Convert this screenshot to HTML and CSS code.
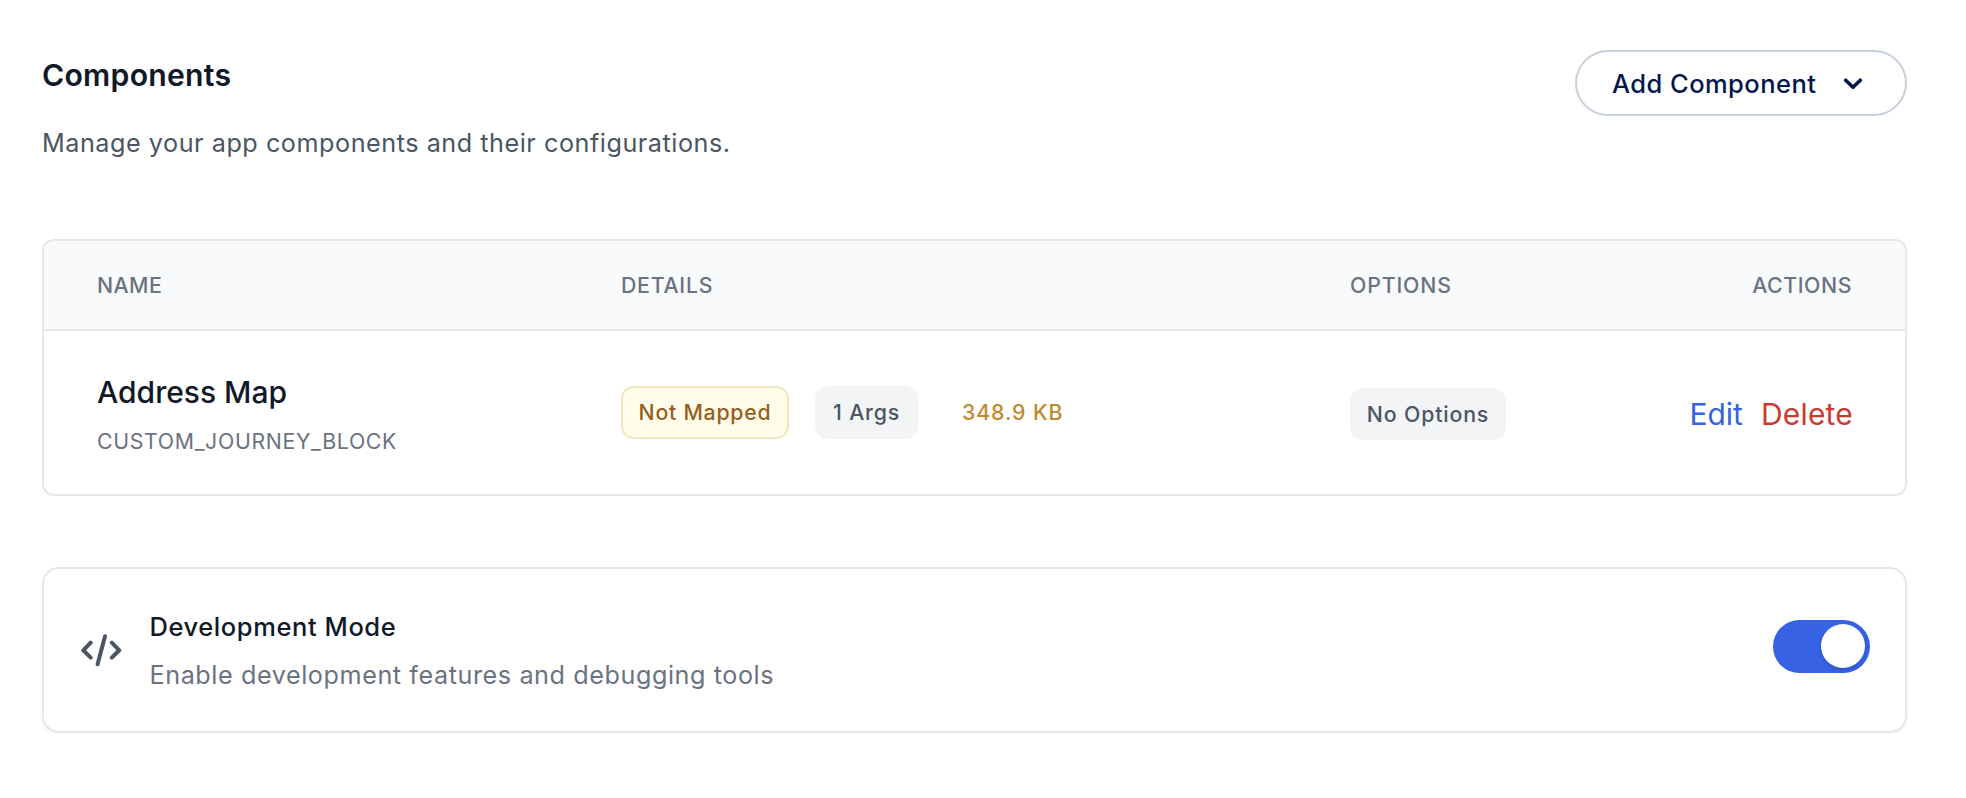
FILE: index.html
```
<!DOCTYPE html>
<html lang="en">
<head>
<meta charset="utf-8">
<title>Components</title>
<link rel="stylesheet" href="styles.css">
</head>
<body>
<main class="page">
  <header class="header">
    <div class="intro">
      <h1 class="title">Components</h1>
      <p class="subtitle">Manage your app components and their configurations.</p>
    </div>
    <button class="add-button" type="button">
      <span>Add Component</span>
      <svg class="chevron" viewBox="0 0 20 12" fill="none" stroke="currentColor" stroke-width="3.6" stroke-linecap="round" stroke-linejoin="round"><path d="M2.7 2.2 10 9.3l7.3-7.1"/></svg>
    </button>
  </header>

  <section class="table">
    <div class="row head">
      <div class="th-name">Name</div>
      <div class="th-details">Details</div>
      <div class="th-options">Options</div>
      <div class="th-actions">Actions</div>
    </div>
    <div class="row item">
      <div class="name-cell">
        <div class="name">Address Map</div>
        <div class="type">CUSTOM_JOURNEY_BLOCK</div>
      </div>
      <div class="details">
        <span class="badge warning">Not Mapped</span>
        <span class="badge args">1 Args</span>
        <span class="size">348.9 KB</span>
      </div>
      <div class="options"><span class="badge none">No Options</span></div>
      <div class="actions"><a class="edit">Edit</a><a class="delete">Delete</a></div>
    </div>
  </section>

  <section class="dev-card">
    <svg class="code-icon" viewBox="0 0 42 36" fill="none" stroke="currentColor" stroke-width="4" stroke-linecap="round" stroke-linejoin="round"><path d="M10.7 10.6 3.2 18.3l7.5 7.3M31.8 10.6l7.5 7.7-7.5 7.3"/><path d="M25 4.2 17.6 32.2"/></svg>
    <div class="dev-text">
      <div class="dev-title">Development Mode</div>
      <div class="dev-desc">Enable development features and debugging tools</div>
    </div>
    <div class="toggle" role="switch" aria-checked="true"><span class="knob"></span></div>
  </section>
</main>
</body>
</html>
```
FILE: styles.css
```
* { box-sizing: border-box; }
body {
  margin: 0;
  background: #fff;
  color: #111827;
  font-family: Inter, "Liberation Sans", sans-serif;
}
.page { padding: 50px 59px 0 42px; }

.header {
  display: flex;
  justify-content: space-between;
  align-items: flex-start;
  height: 189px;
}
.intro { padding-top: 3px; }
.title {
  margin: 0 0 26px;
  font-size: 30.2px;
  line-height: 44px;
  font-weight: 600;
  letter-spacing: 0.25px;
}
.subtitle {
  margin: 0;
  color: #4b5563;
  font-size: 25.2px;
  line-height: 40px;
  letter-spacing: 0.53px;
}
.add-button {
  display: flex;
  align-items: center;
  justify-content: space-between;
  width: 332px;
  height: 66px;
  padding: 1px 42px 0 35px;
  border: 2px solid #c6cfdc;
  border-radius: 33px;
  background: #fff;
  color: #03174d;
  font-family: inherit;
  font-size: 25.5px;
  font-weight: 500;
  letter-spacing: 0.45px;
}
.chevron { width: 20px; height: 12px; }

.table {
  border: 2px solid #e5e7eb;
  border-radius: 12px;
  overflow: hidden;
}
.row {
  display: grid;
  grid-template-columns: 524px 729px 230px 1fr;
  padding: 0 53px;
}
.head {
  height: 90px;
  align-items: center;
  border-bottom: 2px solid #e5e7eb;
  background: #f9fafc;
  color: #6b7280;
  font-size: 21.3px;
  font-weight: 450;
  line-height: 32px;
  text-transform: uppercase;
}
.th-name { letter-spacing: 0.45px; }
.th-details { letter-spacing: 0.75px; }
.th-options { letter-spacing: 0.85px; }
.th-actions { letter-spacing: 0.57px; text-align: right; }

.item { height: 163px; align-items: start; }
.name-cell { padding-top: 39px; }
.name {
  margin-bottom: 11px;
  font-size: 30px;
  line-height: 44px;
  font-weight: 500;
  letter-spacing: 0;
}
.type {
  color: #6b7280;
  font-size: 21.3px;
  line-height: 32px;
  letter-spacing: 0.67px;
}
.details { display: flex; align-items: center; padding-top: 55px; }
.badge {
  display: flex;
  align-items: center;
  justify-content: center;
  height: 53px;
  padding-bottom: 1px;
  border-radius: 13px;
  background: #f3f4f6;
  color: #4b5563;
  font-size: 21.3px;
  font-weight: 500;
  letter-spacing: 0.8px;
}
.warning {
  width: 168px;
  margin-right: 26px;
  border: 2px solid #f3e5c0;
  background: #fffdea;
  color: #975f1f;
  letter-spacing: 0.75px;
}
.args { width: 103px; margin-right: 44px; }
.none { width: 156px; height: 52px; letter-spacing: 0.84px; }
.size {
  padding-bottom: 1px;
  color: #c08a2d;
  font-size: 21.3px;
  font-weight: 500;
  letter-spacing: 0.89px;
}
.options { display: flex; padding-top: 57px; }
.actions {
  display: flex;
  justify-content: flex-end;
  gap: 18px;
  padding-top: 61px;
  font-size: 30px;
  line-height: 44px;
}
.edit { color: #3662e3; }
.delete { color: #cb3a31; letter-spacing: 0.2px; margin-right: -1px; }

.dev-card {
  display: flex;
  align-items: flex-start;
  height: 166px;
  margin-top: 71px;
  padding: 0 35px 0 36px;
  border: 2px solid #e5e7eb;
  border-radius: 17px;
  box-shadow: 0 2px 4px rgba(0, 0, 0, 0.05);
}
.code-icon {
  width: 42px;
  height: 36px;
  margin: 63px 27.5px 0 0;
  color: #4b5563;
}
.dev-text { padding-top: 40px; }
.dev-title {
  margin-bottom: 12px;
  font-size: 25.5px;
  line-height: 36px;
  font-weight: 500;
  letter-spacing: 0.58px;
}
.dev-desc {
  color: #6b7280;
  font-size: 25.2px;
  line-height: 36px;
  letter-spacing: 0.57px;
}
.toggle {
  display: flex;
  justify-content: flex-end;
  width: 97px;
  height: 53px;
  margin: 51px 0 0 auto;
  padding: 4px 5px;
  border-radius: 27px;
  background: #3762e3;
}
.knob {
  width: 44px;
  height: 44px;
  border-radius: 50%;
  background: #fff;
  box-shadow: 0 2px 4px rgba(0, 0, 0, 0.15);
}
```
